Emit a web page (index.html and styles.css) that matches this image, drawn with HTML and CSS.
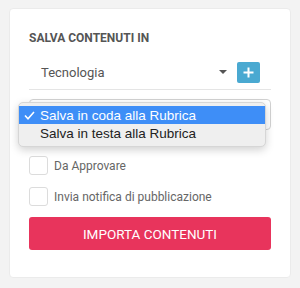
FILE: index.html
```html
<!DOCTYPE html>
<html lang="it">
<head>
    <meta charset="UTF-8">
    <title>Importa contenuti</title>
    <link rel="stylesheet" href="styles.css">
</head>
<body>
    <div class="card">
        <h3 class="card-title">SALVA CONTENUTI IN</h3>

        <div class="pick-row">
            <div class="pick">
                <span>Tecnologia</span>
                <span class="caret"></span>
            </div>
            <button class="add-btn" aria-label="Aggiungi">
                <svg width="11" height="11" viewBox="0 0 11 11"><path d="M5.5 0.5v10M0.5 5.5h10" stroke="#fff" stroke-width="2"/></svg>
            </button>
        </div>

        <div class="native-select">
            <span class="native-value">Salva in coda alla Rubrica</span>
            <svg class="chevron" width="9" height="6" viewBox="0 0 9 6"><path d="M1 1l3.5 3.5L8 1" fill="none" stroke="#777" stroke-width="1.3"/></svg>

            <ul class="popup">
                <li class="selected">
                    <span class="tick"><svg width="11" height="9" viewBox="0 0 11 9"><path d="M1 4.5l3 3.2L10 1" fill="none" stroke="#fff" stroke-width="1.6"/></svg></span>Salva in coda alla Rubrica
                </li>
                <li><span class="tick"></span>Salva in testa alla Rubrica</li>
            </ul>
        </div>

        <label class="check-row">
            <span class="box"></span>
            Da Approvare
        </label>
        <label class="check-row">
            <span class="box"></span>
            Invia notifica di pubblicazione
        </label>

        <button class="import-btn">IMPORTA CONTENUTI</button>
    </div>
</body>
</html>
```

FILE: styles.css
```css
body {
    margin: 0;
    background-color: #f3f3f3;
    font-family: Roboto, 'Liberation Sans', sans-serif;
    color: #666;
}

.card {
    margin: 8px 9px 0 9px;
    height: 270px;
    box-sizing: border-box;
    padding: 22px 19px 0 19px;
    background-color: #fff;
    border: 1px solid #ebebeb;
    border-radius: 4px;
}

.card-title {
    margin: 0 0 10px 0;
    font-size: 12px;
    line-height: 14px;
    font-weight: bold;
    color: #555;
}

/* categoria */
.pick-row {
    display: flex;
    align-items: center;
    height: 34px;
    padding-right: 11px;
    border-bottom: 1px solid #e5e5e5;
}

.pick {
    flex: 1;
    display: flex;
    align-items: center;
    justify-content: space-between;
    padding: 0 10px 0 12px;
    font-size: 13px;
    color: #555;
}

.caret {
    width: 0;
    height: 0;
    border-left: 4px solid transparent;
    border-right: 4px solid transparent;
    border-top: 4px solid #555;
}

.add-btn {
    display: flex;
    align-items: center;
    justify-content: center;
    width: 23px;
    height: 21px;
    padding: 0;
    border: none;
    border-radius: 2px;
    background-color: #4aa9d1;
}

/* select nativa */
.native-select {
    position: relative;
    display: flex;
    align-items: center;
    justify-content: space-between;
    height: 31px;
    box-sizing: border-box;
    margin-top: 9px;
    padding: 0 8px 0 10px;
    border: 1px solid #d2d2d2;
    border-radius: 4px;
    font-family: 'Liberation Sans', sans-serif;
    font-size: 13.5px;
    color: #333;
}

.popup {
    position: absolute;
    left: -12px;
    top: 2px;
    width: 246px;
    margin: 0;
    padding: 3px 0 4px 0;
    list-style: none;
    background-color: #efefef;
    border: 1px solid #d6d6d6;
    border-radius: 5px;
    box-shadow: 0 3px 8px rgba(0, 0, 0, 0.18);
}

.popup li {
    display: flex;
    align-items: center;
    height: 18px;
    color: #222;
}

.popup li.selected {
    background-color: #3e8ef7;
    color: #fff;
}

.tick {
    display: flex;
    align-items: center;
    width: 21px;
    padding-left: 5px;
    box-sizing: border-box;
}

/* checkbox */
.check-row {
    display: flex;
    align-items: center;
    gap: 6px;
    margin-top: 12px;
    font-size: 12px;
    color: #666;
}

.native-select + .check-row {
    margin-top: 26px;
}

.box {
    width: 19px;
    height: 19px;
    box-sizing: border-box;
    border: 1px solid #dcdcdc;
    border-radius: 3px;
    background-color: #fff;
}

.import-btn {
    display: block;
    width: 100%;
    height: 33px;
    margin-top: 11px;
    border: none;
    border-radius: 3px;
    background-color: #e8345c;
    color: #fff;
    font-family: Roboto, sans-serif;
    font-size: 13.5px;
}
```
